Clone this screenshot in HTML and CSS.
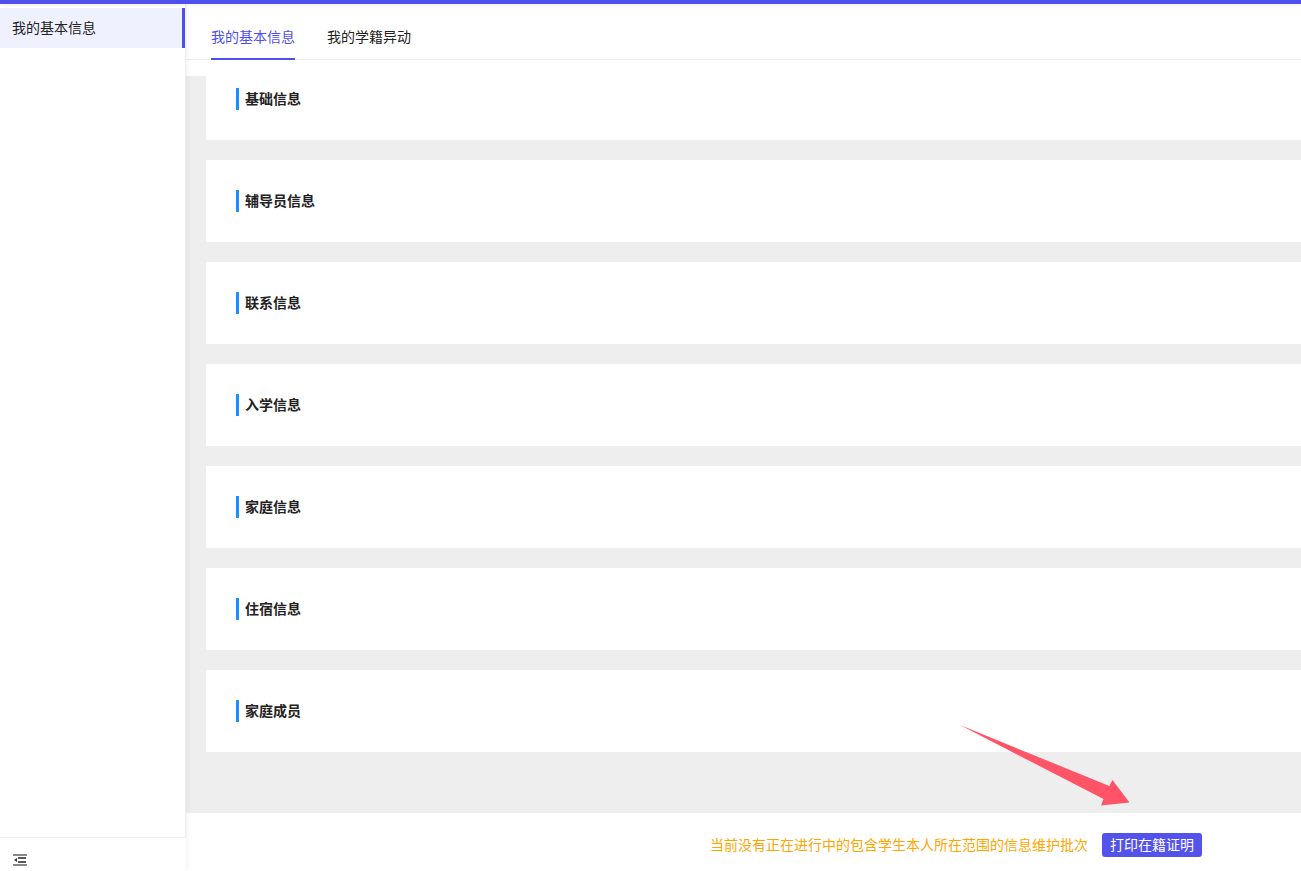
FILE: index.html
```html
<!DOCTYPE html>
<html lang="zh-CN">
<head>
<meta charset="utf-8">
<title>我的基本信息</title>
<link rel="stylesheet" href="styles.css">
</head>
<body>
<div class="topbar"></div>
<div class="layout">
  <aside class="sidebar">
    <nav class="menu">
      <a class="menu-item">我的基本信息</a>
    </nav>
    <div class="side-foot">
      <svg class="fold-icon" width="14" height="12" viewBox="0 0 14 12" aria-hidden="true">
        <path class="fold-light" d="M0 1h14M0 11h14" />
        <path class="fold-dark" d="M5 4h8M5 8h8" />
        <path class="fold-head" d="M1 6l3-2v4z" />
      </svg>
    </div>
  </aside>
  <main class="content">
    <div class="tabs">
      <a class="tab active">我的基本信息</a>
      <a class="tab">我的学籍异动</a>
    </div>
    <div class="panel">
      <section class="card first"><h3 class="title">基础信息</h3></section>
      <section class="card"><h3 class="title">辅导员信息</h3></section>
      <section class="card"><h3 class="title">联系信息</h3></section>
      <section class="card"><h3 class="title">入学信息</h3></section>
      <section class="card"><h3 class="title">家庭信息</h3></section>
      <section class="card"><h3 class="title">住宿信息</h3></section>
      <section class="card"><h3 class="title">家庭成员</h3></section>
    </div>
    <footer class="actions">
      <span class="notice">当前没有正在进行中的包含学生本人所在范围的信息维护批次</span>
      <button class="print-btn">打印在籍证明</button>
    </footer>
  </main>
</div>
<svg class="arrow" width="1301" height="871" viewBox="0 0 1301 871" aria-hidden="true">
  <polygon points="960,725 1109.3,786 1112.5,780 1129.5,802.5 1101,805.5 1103.5,799" />
</svg>
</body>
</html>
```
FILE: styles.css
```css
* { box-sizing: border-box; }
html, body { margin: 0; height: 100%; overflow: hidden; }
body {
  font-family: "Noto Sans CJK SC", "Liberation Sans", sans-serif;
  font-size: 14px;
  color: #222;
  background: #fff;
  display: flex;
  flex-direction: column;
}
.topbar {
  height: 4px;
  flex: none;
  background: #4f4fef;
  box-shadow: 0 1px 4px rgba(0, 0, 0, .08);
  position: relative;
  z-index: 2;
}
.layout { flex: 1; display: flex; min-height: 0; }
.sidebar {
  width: 186px;
  flex: none;
  display: flex;
  flex-direction: column;
  background: #fff;
  box-shadow: 1px 0 6px rgba(0, 0, 0, .06);
  position: relative;
  z-index: 1;
}
.menu { flex: 1; padding-top: 4px; border-right: 1px solid #eee; }
.menu-item {
  display: block;
  height: 40px;
  line-height: 38px;
  padding-left: 12px;
  background: #f0f1ff;
  border-right: 3px solid #4f4fef;
  color: #222;
}
.side-foot {
  height: 34px;
  flex: none;
  border-top: 1px solid #eee;
  padding: 16px 0 0 13px;
  background: #fff;
}
.fold-icon { display: block; }
.fold-light { stroke: #888; stroke-width: 2; fill: none; }
.fold-dark { stroke: #222; stroke-width: 1.4; fill: none; }
.fold-head { fill: #333; }
.content { flex: 1; min-width: 0; display: flex; flex-direction: column; }
.tabs {
  height: 56px;
  flex: none;
  display: flex;
  gap: 32px;
  padding-left: 25px;
  border-bottom: 1px solid #eee;
}
.tab { height: 56px; line-height: 64px; color: #222; }
.tab.active { color: #4f4fef; border-bottom: 2px solid #4f4fef; }
.panel {
  flex: 1;
  margin-top: 16px;
  background: #eee;
  padding-left: 20px;
  display: flex;
  flex-direction: column;
  gap: 20px;
  min-height: 0;
}
.card {
  height: 82px;
  flex: none;
  background: #fff;
  padding: 30px 0 0 30px;
}
.card.first { height: 64px; padding-top: 12px; }
.title {
  margin: 0;
  height: 22px;
  line-height: 20px;
  padding-left: 6px;
  border-left: 3px solid #1890ff;
  font-size: 14px;
  font-weight: 700;
  color: #222;
}
.actions {
  height: 58px;
  flex: none;
  background: #fff;
  display: flex;
  align-items: center;
  justify-content: flex-end;
  gap: 14px;
  padding-right: 99px;
  padding-top: 5px;
}
.notice { color: #ffa500; font-size: 14px; padding-bottom: 2px; }
.print-btn {
  width: 100px;
  height: 24px;
  padding: 0 0 2px;
  border: 0;
  border-radius: 3px;
  background: #5353ec;
  color: #fff;
  font: inherit;
  font-size: 14px;
  line-height: 22px;
}
.arrow { position: absolute; left: 0; top: 0; z-index: 3; pointer-events: none; }
.arrow polygon { fill: #ff5468; }
```
